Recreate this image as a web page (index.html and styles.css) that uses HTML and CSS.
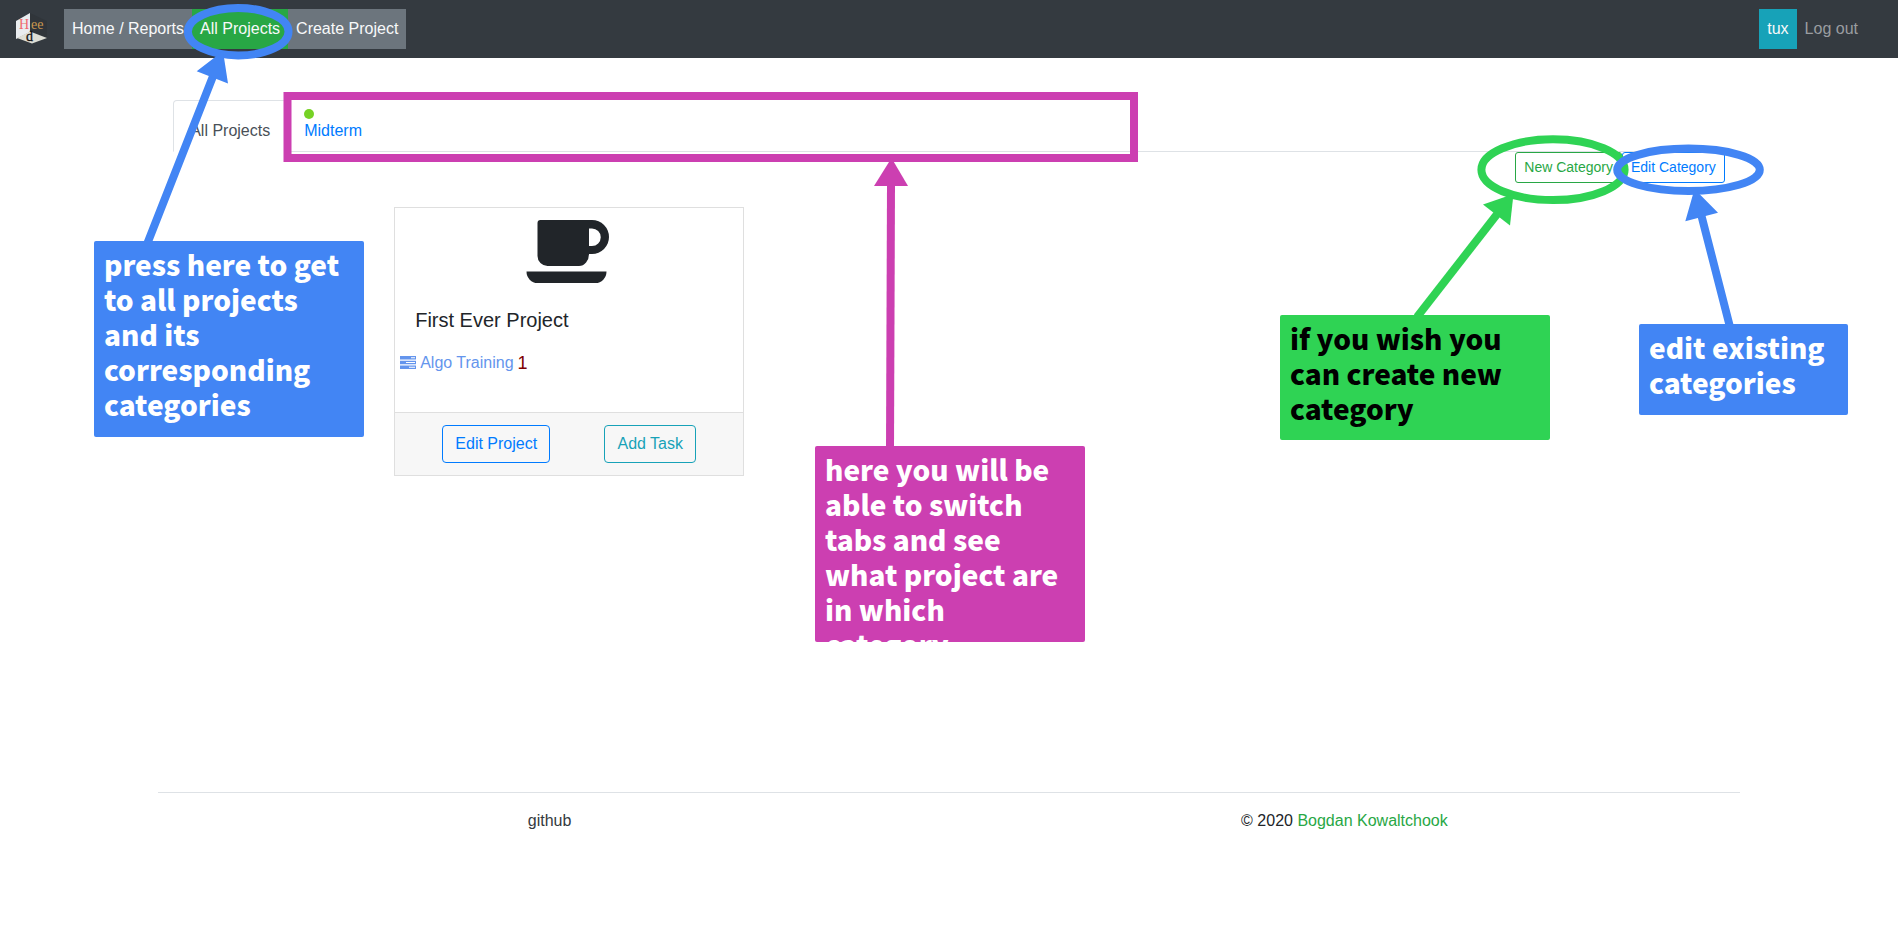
FILE: index.html
```html
<!DOCTYPE html>
<html lang="en">
<head>
<meta charset="utf-8">
<title>Heed – All Projects</title>
<link rel="stylesheet" href="styles.css">
</head>
<body>
<header class="navbar">
  <a class="brand" href="#" aria-label="Heed">
    <svg class="logo" viewBox="0 0 32 32" aria-hidden="true">
      <path d="M0 8L14 0V19L0 26Z" fill="#e9ecef"/>
      <path d="M14 0L31 8V25L14 18Z" fill="#30353a"/>
      <path d="M1 25L14 18.500L31 25L16 30.500Z" fill="#deded6"/>
      <text class="logo-text" x="3" y="15.500" font-size="14" fill="#f0686c">H</text>
      <text class="logo-text" x="15" y="15.500" font-size="14" fill="#c9974f">ee</text>
      <text class="logo-text" x="10" y="28" font-size="14" fill="#111" stroke="#111" stroke-width=".3">d</text>
    </svg>
  </a>
  <nav class="nav-group">
    <a class="nav-item" href="#">Home / Reports</a>
    <a class="nav-item nav-item-active" href="#">All Projects</a>
    <a class="nav-item" href="#">Create Project</a>
  </nav>
  <div class="nav-user">
    <a class="nav-item nav-item-user" href="#">tux</a>
    <a class="nav-item nav-item-logout" href="#">Log out</a>
  </div>
</header>

<main class="page">
  <div class="content">
    <nav class="tabs">
      <a class="tab tab-active" href="#"><span class="dot dot-none"></span>All Projects</a>
      <a class="tab" href="#"><span class="dot"></span>Midterm</a>
    </nav>
    <div class="category-actions">
      <button class="btn btn-small btn-green" type="button">New Category</button>
      <button class="btn btn-small btn-blue" type="button">Edit Category</button>
    </div>
    <section class="projects">
      <article class="card">
        <div class="card-body">
          <svg class="cup" viewBox="0 0 83 64" aria-hidden="true">
            <path fill="#212529" fill-rule="evenodd" d="M14.500 0H66A17 17 0 0 1 66 34H63A10 12 0 0 1 53 46H21.500A10 10 0 0 1 11.500 36V3A3 3 0 0 1 14.500 0ZM63 8.500V26H66A8.700 8.700 0 0 0 66 8.500Z"/>
            <path fill="#212529" d="M0.500 51.500H80.500A11 11.500 0 0 1 69.500 63H11.500A11 11.500 0 0 1 0.500 51.500Z"/>
          </svg>
          <h2 class="card-title">First Ever Project</h2>
          <a class="task" href="#">
            <svg class="task-icon" viewBox="0 0 16 13" aria-hidden="true">
              <path fill="#6495ed" fill-rule="evenodd" d="M0 0H16V3.500H0ZM11 1.300V2.300H15V1.300ZM0 4.700H16V8.200H0ZM6 6V7H15V6ZM0 9.500H16V13H0ZM9 10.700V11.700H15V10.700Z"/>
            </svg>
            <span>Algo Training</span>
            <span class="task-count">1</span>
          </a>
        </div>
        <div class="card-footer">
          <button class="btn btn-blue" type="button">Edit Project</button>
          <button class="btn btn-teal" type="button">Add Task</button>
        </div>
      </article>
    </section>
  </div>
  <footer class="footer">
    <a class="footer-link" href="#">github</a>
    <p class="copyright">© 2020 <a class="author" href="#">Bogdan Kowaltchook</a></p>
  </footer>
</main>

<div class="notes">
  <svg class="marks" viewBox="0 0 1898 930" aria-hidden="true">
    <g fill="none" stroke-width="8">
      <g stroke="#cc3fb1">
        <rect x="287.500" y="96" width="846.500" height="62"/>
        <path d="M891 184L890 448"/>
      </g>
      <g stroke="#2fd354">
        <ellipse cx="1553" cy="169.700" rx="71.600" ry="30.400"/>
        <path d="M1498 213L1417 317"/>
      </g>
      <g stroke="#4285f4">
        <ellipse cx="238.200" cy="31.700" rx="50.300" ry="23.700"/>
        <ellipse cx="1688.500" cy="169.800" rx="71.300" ry="21.200"/>
        <path d="M213.500 75L147.500 243M1701 214L1730 327"/>
      </g>
    </g>
    <path fill="#cc3fb1" d="M891.500 158L908 186H874Z"/>
    <path fill="#2fd354" d="M1513.500 194L1510 225.500L1483 204.500Z"/>
    <path fill="#4285f4" d="M223 51L228 83.500L196.700 71.300ZM1694.500 189L1718 212.700L1685.300 221.300Z"/>
  </svg>
  <p class="note note-projects">press here to get to all projects and its corresponding categories</p>
  <p class="note note-tabs">here you will be able to switch tabs and see what project are in which category</p>
  <p class="note note-new">if you wish you can create new category</p>
  <p class="note note-edit">edit existing categories</p>
</div>
</body>
</html>
```

FILE: styles.css
```css
* { box-sizing: border-box; }

body {
  margin: 0;
  background: #fff;
  color: #212529;
  font: 16px/24px "Liberation Sans", Arial, sans-serif;
}

a { color: inherit; text-decoration: none; }
p, h2 { margin: 0; }

/* Top bar */
.navbar {
  display: flex;
  align-items: center;
  min-height: 58px;
  padding: 0 32px 0 16px;
  background: #343a40;
}
.brand { display: flex; margin-right: 16px; }
.logo { width: 32px; height: 32px; }
.logo-text { font-family: "Liberation Serif", serif; }
.nav-group { display: flex; background: #6c757d; }
.nav-user { display: flex; margin-left: auto; }
.nav-item { padding: 8px; color: #f8f9fa; }
.nav-item-active { background: #28a745; }
.nav-item-user { background: #17a2b8; }
.nav-item-logout { color: #9a9da0; }

/* Page */
.page { width: 83.333%; margin: 0 auto; }
.content { min-height: 734px; padding: 42px 15px 0; }

.tabs { display: flex; border-bottom: 1px solid #dee2e6; }
.tab {
  margin-bottom: -1px;
  padding: 8px 16px;
  border: 1px solid transparent;
  border-radius: 4px 4px 0 0;
  color: #007bff;
}
.tab-active {
  border-color: #dee2e6 #dee2e6 #fff;
  background: #fff;
  color: #495057;
}
.dot {
  display: block;
  width: 10px;
  height: 10px;
  border-radius: 50%;
  background: #76d225;
}
.dot-none { background: transparent; }

.btn {
  padding: 6px 12px;
  border: 1px solid currentColor;
  border-radius: 4px;
  background: transparent;
  font: inherit;
}
.btn-small { padding: 4px 8px; border-radius: 3px; font-size: 14px; line-height: 21px; }
.btn-blue { color: #007bff; }
.btn-green { color: #28a745; }
.btn-teal { color: #17a2b8; }
.category-actions { display: flex; justify-content: flex-end; }

/* Project card */
.projects { padding: 24px 0 0 221px; }
.card { width: 350px; border: 1px solid #dfdfdf; }
.card-body { display: flex; flex-direction: column; min-height: 204px; padding: 12px 0 0; }
.cup { width: 83px; height: 64px; margin-left: 131px; }
.card-title { margin: 24px 20px 0; font-size: 20px; font-weight: 400; line-height: 24px; }
.task { display: flex; align-items: center; gap: 4px; margin: 19px 5px 0; color: #6495ed; }
.task-icon { width: 16px; height: 13px; margin-bottom: 2px; }
.task-count { color: #800000; font-size: 18px; }
.card-footer {
  display: flex;
  justify-content: space-around;
  padding: 12px 20px;
  border-top: 1px solid #dfdfdf;
  background: #f7f7f7;
}

.footer {
  display: grid;
  grid-template-columns: 1fr 1fr;
  padding-top: 16px;
  border-top: 1px solid #dee2e6;
  text-align: center;
}
.footer-link { padding-right: 8px; color: #343a40; }
.author { color: #28a745; }

/* Tutorial notes drawn over the page */
.notes { position: absolute; top: 0; left: 0; pointer-events: none; }
.marks { display: block; width: 1898px; height: 930px; }
.note {
  position: absolute;
  width: 270px;
  padding: 6px 16px 6px 10px;
  overflow: hidden;
  border-radius: 2px;
  background: #4285f4;
  color: #fff;
  font: 900 28px/35px "Noto Sans CJK JP", "Noto Sans", sans-serif;
}
.note-projects { top: 241px; left: 94px; height: 196px; }
.note-tabs { top: 446px; left: 815px; height: 196px; background: #cc3fb1; }
.note-new { top: 315px; left: 1280px; height: 125px; background: #2fd354; color: #000; }
.note-edit { top: 324px; left: 1639px; width: 209px; height: 91px; }
```
